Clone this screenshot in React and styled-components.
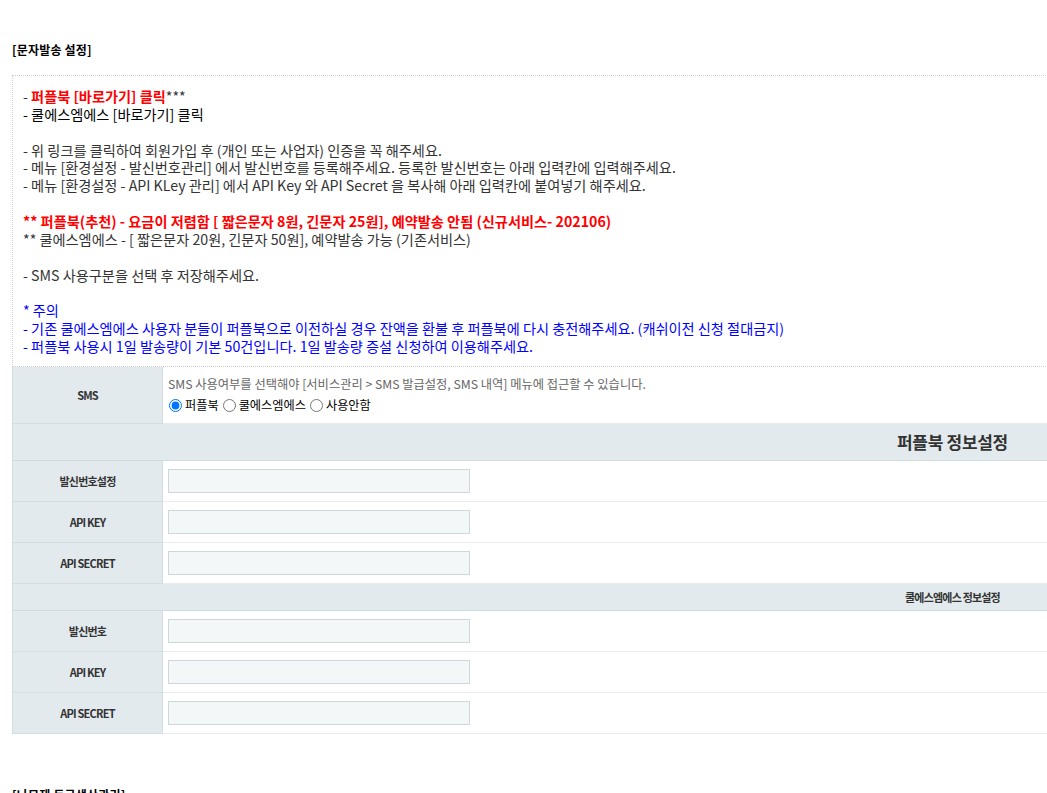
import styled, { createGlobalStyle } from "styled-components";

const GlobalStyle = createGlobalStyle`
  html, body {
    margin: 0;
    padding: 0;
    overflow-x: hidden;
    background: #fff;
    font-family: "Noto Sans CJK KR", "Noto Sans", sans-serif;
  }
`;

const Page = styled.div`
  width: 1880px;
  padding: 41px 0 0 12px;
`;

const SectionTitle = styled.h3`
  margin: 0;
  font-size: 12px;
  line-height: 18px;
  font-weight: 700;
  letter-spacing: 0.2px;
  color: #000;
`;

const Notice = styled.div`
  margin-top: 16px;
  border: 1px dotted #cfcfcf;
  padding: 12px 10px 10px;
  font-size: 14.2px;
  line-height: 17.86px;
  color: #333;
`;

const Line = styled.div`
  min-height: 17.86px;
  color: ${(p) => p.$color || "inherit"};
  font-weight: ${(p) => (p.$bold ? 700 : 400)};
`;

const Red = styled.span`
  color: #ff0000;
  font-weight: 700;
`;

const Table = styled.table`
  width: 100%;
  border-collapse: collapse;
  border-left: 1px solid #d3dee3;
  font-size: 12px;
`;

const Th = styled.th`
  width: 149px;
  background: #e3eaee;
  border-right: 1px solid #d3dee3;
  border-bottom: 1px solid #d3dee3;
  font-size: 11px;
  font-weight: 700;
  letter-spacing: -0.8px;
  color: #333;
  height: ${(p) => p.$h || 40}px;
  padding: 0;
  text-align: center;
`;

const Td = styled.td`
  border-bottom: 1px solid #e8ecee;
  padding: ${(p) => (p.$pad ? "7px 5px 6px" : "0 5px")};
  vertical-align: middle;
`;

const GroupHead = styled.th`
  background: #e3eaee;
  border-bottom: 1px solid #cddade;
  height: ${(p) => p.$h}px;
  padding: 0;
  text-align: center;
  font-size: ${(p) => p.$size}px;
  font-weight: 700;
  letter-spacing: ${(p) => (p.$size > 12 ? "-0.3px" : "-0.8px")};
  color: #333;
`;

const Help = styled.div`
  color: #666;
  font-size: 12.25px;
  line-height: 20px;
`;

const Radios = styled.div`
  display: flex;
  align-items: center;
  font-size: 12.2px;
  line-height: 22px;
  color: #000;
`;

const Radio = styled.label`
  display: inline-flex;
  align-items: center;
  & + & {
    margin-left: 3px;
  }
  input {
    margin: 0 3px 0 1px;
    width: 13px;
    height: 13px;
  }
`;

const Field = styled.input`
  box-sizing: border-box;
  width: 302px;
  height: 24px;
  border: 1px solid #cdd8dd;
  background: #f4f7f8;
  outline: none;
  display: block;
`;

const NextTitle = styled(SectionTitle)`
  margin-top: 52px;
`;

function FieldRow({ label }) {
  return (
    <tr>
      <Th $h={40}>{label}</Th>
      <Td>
        <Field type="text" />
      </Td>
    </tr>
  );
}

export default function App() {
  return (
    <>
      <GlobalStyle />
      <Page>
        <SectionTitle>[문자발송 설정]</SectionTitle>
        <Notice>
          <Line>
            - <Red>퍼플북 [바로가기] 클릭</Red>***
          </Line>
          <Line $color="#000">- 쿨에스엠에스 [바로가기] 클릭</Line>
          <Line />
          <Line>- 위 링크를 클릭하여 회원가입 후 (개인 또는 사업자) 인증을 꼭 해주세요.</Line>
          <Line>- 메뉴 [환경설정 - 발신번호관리] 에서 발신번호를 등록해주세요. 등록한 발신번호는 아래 입력칸에 입력해주세요.</Line>
          <Line>- 메뉴 [환경설정 - API KLey 관리] 에서 API Key 와 API Secret 을 복사해 아래 입력칸에 붙여넣기 해주세요.</Line>
          <Line />
          <Line $color="#ff0000" $bold>
            ** 퍼플북(추천) - 요금이 저렴함 [ 짧은문자 8원, 긴문자 25원], 예약발송 안됨 (신규서비스- 202106)
          </Line>
          <Line>** 쿨에스엠에스 - [ 짧은문자 20원, 긴문자 50원], 예약발송 가능 (기존서비스)</Line>
          <Line />
          <Line>- SMS 사용구분을 선택 후 저장해주세요.</Line>
          <Line />
          <Line $color="#0000ff">* 주의</Line>
          <Line $color="#0000ff">
            - 기존 쿨에스엠에스 사용자 분들이 퍼플북으로 이전하실 경우 잔액을 환불 후 퍼플북에 다시 충전해주세요. (캐쉬이전 신청 절대금지)
          </Line>
          <Line $color="#0000ff">- 퍼플북 사용시 1일 발송량이 기본 50건입니다. 1일 발송량 증설 신청하여 이용해주세요.</Line>
        </Notice>
        <Table>
          <tbody>
            <tr>
              <Th $h={56}>SMS</Th>
              <Td $pad>
                <Help>SMS 사용여부를 선택해야 [서비스관리 &gt; SMS 발급설정, SMS 내역] 메뉴에 접근할 수 있습니다.</Help>
                <Radios>
                  <Radio>
                    <input type="radio" name="sms" defaultChecked />
                    퍼플북
                  </Radio>
                  <Radio>
                    <input type="radio" name="sms" />
                    쿨에스엠에스
                  </Radio>
                  <Radio>
                    <input type="radio" name="sms" />
                    사용안함
                  </Radio>
                </Radios>
              </Td>
            </tr>
            <tr>
              <GroupHead colSpan={2} $h={36} $size={17}>
                퍼플북 정보설정
              </GroupHead>
            </tr>
            <FieldRow label="발신번호설정" />
            <FieldRow label="API KEY" />
            <FieldRow label="API SECRET" />
            <tr>
              <GroupHead colSpan={2} $h={26} $size={11}>
                쿨에스엠에스 정보설정
              </GroupHead>
            </tr>
            <FieldRow label="발신번호" />
            <FieldRow label="API KEY" />
            <FieldRow label="API SECRET" />
          </tbody>
        </Table>
        <NextTitle>[나모제 등급생산관리]</NextTitle>
      </Page>
    </>
  );
}
